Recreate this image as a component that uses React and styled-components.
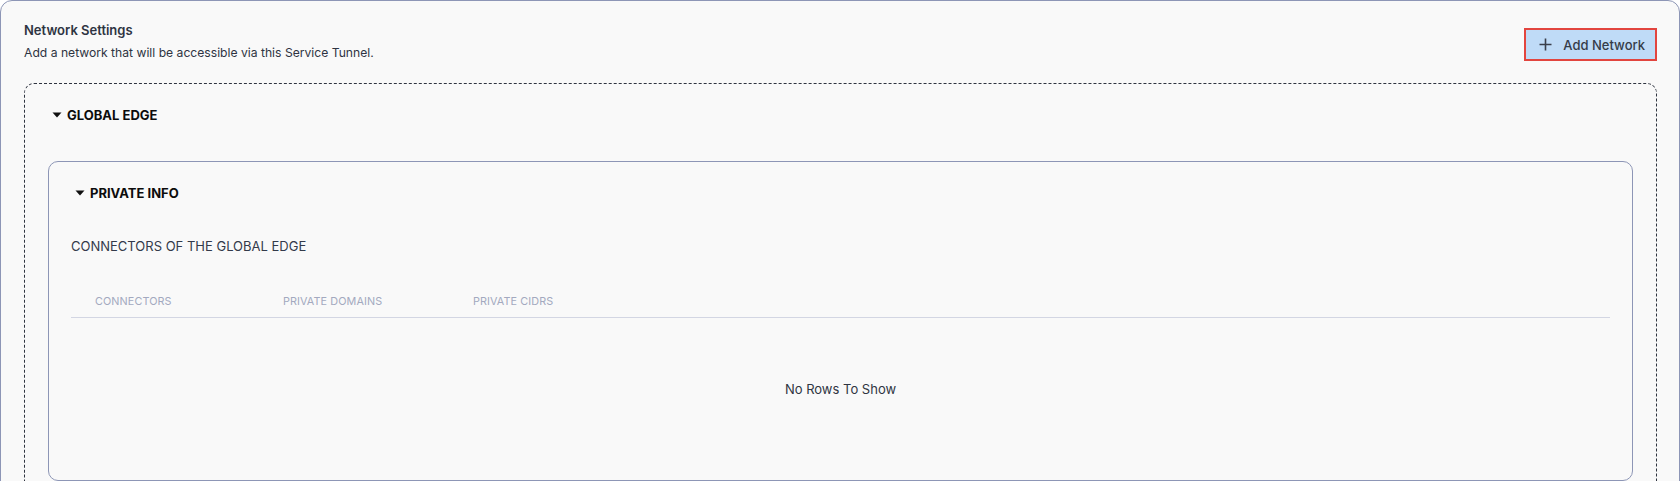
import styled, { createGlobalStyle } from "styled-components";

const GlobalStyle = createGlobalStyle`
  body {
    margin: 0;
    background: #ffffff;
    font-family: Inter, "Noto Sans", sans-serif;
  }
`;

const Card = styled.section`
  box-sizing: border-box;
  width: 1680px;
  min-height: 520px;
  border: 1px solid #8d96b6;
  border-radius: 12px;
  background: #f9f9f9;
  padding: 20px 22px 0 23px;
`;

const Header = styled.div`
  display: flex;
  justify-content: space-between;
  align-items: flex-start;
  height: 62px;
`;

const TitleBlock = styled.div`
  display: flex;
  flex-direction: column;
  gap: 6px;
`;

const Title = styled.h2`
  margin: 0;
  font-size: 13px;
  line-height: 18px;
  font-weight: 600;
  color: #2e3442;
`;

const Subtitle = styled.p`
  margin: 0;
  font-size: 12.15px;
  line-height: 16px;
  color: #2e3442;
`;

const AddButton = styled.button`
  all: unset;
  box-sizing: border-box;
  display: flex;
  align-items: center;
  gap: 11px;
  margin-top: 7px;
  height: 33px;
  padding: 0 10px 0 13px;
  background: #bfdbf7;
  border: 2px solid #e2453f;
  color: #353b48;
  font-size: 13px;
  font-weight: 500;
  cursor: pointer;
`;

const Group = styled.div`
  box-sizing: border-box;
  border: 1px dashed #2f3440;
  border-radius: 10px;
  padding: 0 23px;
  min-height: 420px;
`;

const Inner = styled.div`
  box-sizing: border-box;
  border: 1px solid #8d96b6;
  border-radius: 10px;
  padding: 0 22px 20px 22px;
`;

const Toggle = styled.div`
  display: flex;
  align-items: center;
  gap: 5px;
  height: 62px;
  margin-bottom: ${(p) => p.$gap || 0}px;
  padding-left: ${(p) => p.$indent}px;
  font-size: 13px;
  font-weight: 700;
  color: #0c0c0c;
  text-transform: uppercase;
`;

const Caret = () => (
  <svg width="10" height="6" viewBox="0 0 10 6">
    <path d="M0.5 0.5h9L5 5.5z" fill="#111" />
  </svg>
);

const Section = styled.div`
  margin-top: 11px;
  height: 50px;
  font-size: 13px;
  line-height: 22px;
  color: #333a4a;
`;

const HeadRow = styled.div`
  display: grid;
  grid-template-columns: 188px 190px 1fr;
  padding-left: 24px;
  height: 32px;
  align-items: center;
  border-bottom: 1px solid #d3d6e3;
`;

const HeadCell = styled.div`
  font-size: 10.8px;
  color: #a3a9bf;
  letter-spacing: 0.1px;
  text-transform: uppercase;
`;

const Empty = styled.div`
  display: flex;
  justify-content: center;
  align-items: center;
  height: 142px;
  font-size: 13px;
  color: #2f3542;
`;

const PlusIcon = () => (
  <svg width="13" height="13" viewBox="0 0 13 13">
    <path d="M6.5 0.5v12M0.5 6.5h12" stroke="#3a3f4b" strokeWidth="1.6" />
  </svg>
);

export default function App() {
  return (
    <>
      <GlobalStyle />
      <Card>
        <Header>
          <TitleBlock>
            <Title>Network Settings</Title>
            <Subtitle>Add a network that will be accessible via this Service Tunnel.</Subtitle>
          </TitleBlock>
          <AddButton>
            <PlusIcon />
            Add Network
          </AddButton>
        </Header>
        <Group>
          <Toggle $indent={4} $gap={15}>
            <Caret />
            Global Edge
          </Toggle>
          <Inner>
            <Toggle $indent={4}>
              <Caret />
              Private Info
            </Toggle>
            <Section>CONNECTORS OF THE GLOBAL EDGE</Section>
            <HeadRow>
              <HeadCell>Connectors</HeadCell>
              <HeadCell>Private Domains</HeadCell>
              <HeadCell>Private CIDRs</HeadCell>
            </HeadRow>
            <Empty>No Rows To Show</Empty>
          </Inner>
        </Group>
      </Card>
    </>
  );
}
